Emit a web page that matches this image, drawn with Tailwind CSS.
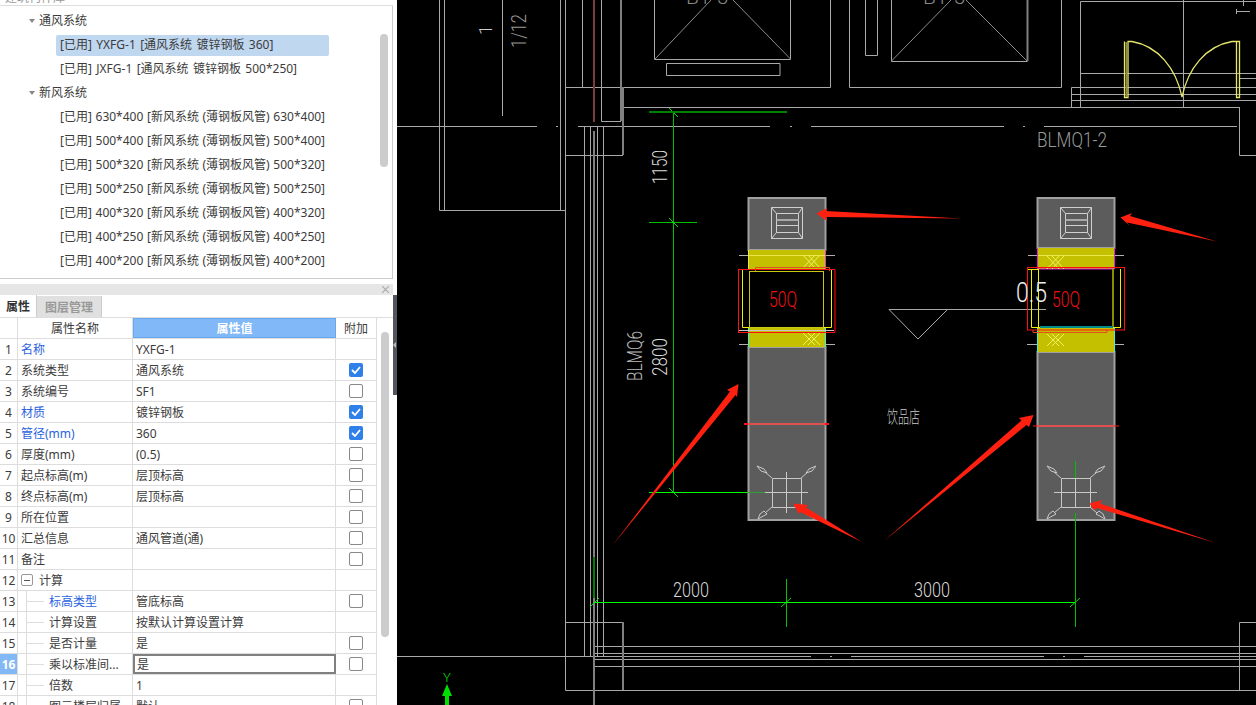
<!DOCTYPE html>
<html lang="en">
<head>
    <meta charset="UTF-8">
    <meta name="viewport" content="width=device-width, initial-scale=1.0">
    <title>风管属性</title>
    <script src="https://cdn.jsdelivr.net/npm/@tailwindcss/browser@4"></script>
</head>
<body class="bg-black h-screen overflow-hidden flex font-['Noto_Sans','Noto_Sans_CJK_SC',sans-serif] text-[12px] leading-none text-[#3c3c3c]">

    <!-- left panels -->
    <aside class="w-[393px] h-[705px] bg-white flex flex-col overflow-hidden shrink-0">
        <div class="h-[6px] border-b border-[#ddd] overflow-hidden shrink-0">
            <div class="-mt-[8px] ml-[5px] h-[12px] text-[#999]">建筑构件库</div>
        </div>

        <!-- tree -->
        <div class="h-[273px] border-b border-r border-[#ccc] flex shrink-0">
            <div class="w-[380px] pt-[3px]">
                <div class="h-6 flex items-center pl-[29px]"><span class="w-0 h-0 border-x-[3px] border-t-[4px] border-x-transparent border-t-[#888] mr-[4px]"></span>通风系统</div>
                <div class="h-6 flex items-center pl-[56px] [word-spacing:1.25px]"><span class="w-[273px] h-[21px] pl-[4px] flex items-center bg-[#c0d7f0] rounded-[2px]">[已用] YXFG-1 [通风系统 镀锌钢板 360]</span></div>
                <div class="h-6 flex items-center pl-[60px] [word-spacing:1.25px]">[已用] JXFG-1 [通风系统 镀锌钢板 500*250]</div>
                <div class="h-6 flex items-center pl-[29px]"><span class="w-0 h-0 border-x-[3px] border-t-[4px] border-x-transparent border-t-[#888] mr-[4px]"></span>新风系统</div>
                <div class="h-6 flex items-center pl-[60px] [word-spacing:0.5px]">[已用] 630*400 [新风系统 (薄钢板风管) 630*400]</div>
                <div class="h-6 flex items-center pl-[60px] [word-spacing:0.5px]">[已用] 500*400 [新风系统 (薄钢板风管) 500*400]</div>
                <div class="h-6 flex items-center pl-[60px] [word-spacing:0.5px]">[已用] 500*320 [新风系统 (薄钢板风管) 500*320]</div>
                <div class="h-6 flex items-center pl-[60px] [word-spacing:0.5px]">[已用] 500*250 [新风系统 (薄钢板风管) 500*250]</div>
                <div class="h-6 flex items-center pl-[60px] [word-spacing:0.5px]">[已用] 400*320 [新风系统 (薄钢板风管) 400*320]</div>
                <div class="h-6 flex items-center pl-[60px] [word-spacing:0.5px]">[已用] 400*250 [新风系统 (薄钢板风管) 400*250]</div>
                <div class="h-6 flex items-center pl-[60px] [word-spacing:0.5px]">[已用] 400*200 [新风系统 (薄钢板风管) 400*200]</div>
            </div>
            <div class="w-[8px] h-[133px] mt-[28px] bg-[#ccc] rounded-[4px]"></div>
        </div>

        <div class="h-[5px] shrink-0"></div>

        <!-- panel title bar -->
        <div class="h-[11px] bg-[#e6e6e6] flex items-center justify-end pr-[4px] shrink-0">
            <svg width="7" height="7" viewBox="0 0 7 7" fill="none" stroke="#aaa" stroke-width="1.2"><path d="M0 0L7 7M7 0L0 7"/></svg>
        </div>

        <!-- tabs -->
        <div class="h-[23px] flex items-stretch border-b border-[#ddd] shrink-0">
            <div class="w-[37px] pt-[2px] border-r border-[#ccc] flex items-center justify-center font-bold text-[#333]">属性</div>
            <div class="w-[65px] mt-px pt-[2px] bg-[#e0e0e0] border-r border-[#ccc] flex items-center justify-center font-bold text-[#999]">图层管理</div>
        </div>

        <div class="flex flex-1 min-h-0">
            <!-- property table -->
            <div class="w-[377px] border-r border-[#ddd]">
                <div class="h-[21px] flex border-b border-[#ddd]">
                    <div class="w-[18px] border-r border-[#ddd]"></div>
                    <div class="w-[115px] pt-[2px] border-r border-[#ddd] flex items-center justify-center">属性名称</div>
                    <div class="w-[203px] pt-[2px] bg-[#80b8f8] border border-[#6aa8ee] flex items-center justify-center font-bold text-white">属性值</div>
                    <div class="flex-1 pt-[2px] flex items-center justify-center">附加</div>
                </div>

                <div class="h-[21px] flex border-b border-[#ddd]"><div class="w-[18px] pt-[2px] border-r border-[#ddd] flex items-center justify-center">1</div><div class="w-[115px] pt-[2px] border-r border-[#ddd] flex items-center pl-[3px] text-[#2a62e0]">名称</div><div class="w-[203px] pt-[2px] border-r border-[#ddd] flex items-center pl-[3px]">YXFG-1</div><div class="flex-1"></div></div>
                <div class="h-[21px] flex border-b border-[#ddd]"><div class="w-[18px] pt-[2px] border-r border-[#ddd] flex items-center justify-center">2</div><div class="w-[115px] pt-[2px] border-r border-[#ddd] flex items-center pl-[3px]">系统类型</div><div class="w-[203px] pt-[2px] border-r border-[#ddd] flex items-center pl-[3px]">通风系统</div><div class="flex-1 flex items-center justify-center"><span class="w-[14px] h-[14px] bg-[#2f80e8] rounded-[2px] flex items-center justify-center"><svg width="10" height="8" viewBox="0 0 10 8" fill="none" stroke="#fff" stroke-width="1.8"><path d="M1 4L4 7L9 1"/></svg></span></div></div>
                <div class="h-[21px] flex border-b border-[#ddd]"><div class="w-[18px] pt-[2px] border-r border-[#ddd] flex items-center justify-center">3</div><div class="w-[115px] pt-[2px] border-r border-[#ddd] flex items-center pl-[3px]">系统编号</div><div class="w-[203px] pt-[2px] border-r border-[#ddd] flex items-center pl-[3px]">SF1</div><div class="flex-1 flex items-center justify-center"><span class="w-[14px] h-[14px] border border-[#888] rounded-[2px]"></span></div></div>
                <div class="h-[21px] flex border-b border-[#ddd]"><div class="w-[18px] pt-[2px] border-r border-[#ddd] flex items-center justify-center">4</div><div class="w-[115px] pt-[2px] border-r border-[#ddd] flex items-center pl-[3px] text-[#2a62e0]">材质</div><div class="w-[203px] pt-[2px] border-r border-[#ddd] flex items-center pl-[3px]">镀锌钢板</div><div class="flex-1 flex items-center justify-center"><span class="w-[14px] h-[14px] bg-[#2f80e8] rounded-[2px] flex items-center justify-center"><svg width="10" height="8" viewBox="0 0 10 8" fill="none" stroke="#fff" stroke-width="1.8"><path d="M1 4L4 7L9 1"/></svg></span></div></div>
                <div class="h-[21px] flex border-b border-[#ddd]"><div class="w-[18px] pt-[2px] border-r border-[#ddd] flex items-center justify-center">5</div><div class="w-[115px] pt-[2px] border-r border-[#ddd] flex items-center pl-[3px] text-[#2a62e0]">管径(mm)</div><div class="w-[203px] pt-[2px] border-r border-[#ddd] flex items-center pl-[3px]">360</div><div class="flex-1 flex items-center justify-center"><span class="w-[14px] h-[14px] bg-[#2f80e8] rounded-[2px] flex items-center justify-center"><svg width="10" height="8" viewBox="0 0 10 8" fill="none" stroke="#fff" stroke-width="1.8"><path d="M1 4L4 7L9 1"/></svg></span></div></div>
                <div class="h-[21px] flex border-b border-[#ddd]"><div class="w-[18px] pt-[2px] border-r border-[#ddd] flex items-center justify-center">6</div><div class="w-[115px] pt-[2px] border-r border-[#ddd] flex items-center pl-[3px]">厚度(mm)</div><div class="w-[203px] pt-[2px] border-r border-[#ddd] flex items-center pl-[3px]">(0.5)</div><div class="flex-1 flex items-center justify-center"><span class="w-[14px] h-[14px] border border-[#888] rounded-[2px]"></span></div></div>
                <div class="h-[21px] flex border-b border-[#ddd]"><div class="w-[18px] pt-[2px] border-r border-[#ddd] flex items-center justify-center">7</div><div class="w-[115px] pt-[2px] border-r border-[#ddd] flex items-center pl-[3px]">起点标高(m)</div><div class="w-[203px] pt-[2px] border-r border-[#ddd] flex items-center pl-[3px]">层顶标高</div><div class="flex-1 flex items-center justify-center"><span class="w-[14px] h-[14px] border border-[#888] rounded-[2px]"></span></div></div>
                <div class="h-[21px] flex border-b border-[#ddd]"><div class="w-[18px] pt-[2px] border-r border-[#ddd] flex items-center justify-center">8</div><div class="w-[115px] pt-[2px] border-r border-[#ddd] flex items-center pl-[3px]">终点标高(m)</div><div class="w-[203px] pt-[2px] border-r border-[#ddd] flex items-center pl-[3px]">层顶标高</div><div class="flex-1 flex items-center justify-center"><span class="w-[14px] h-[14px] border border-[#888] rounded-[2px]"></span></div></div>
                <div class="h-[21px] flex border-b border-[#ddd]"><div class="w-[18px] pt-[2px] border-r border-[#ddd] flex items-center justify-center">9</div><div class="w-[115px] pt-[2px] border-r border-[#ddd] flex items-center pl-[3px]">所在位置</div><div class="w-[203px] border-r border-[#ddd]"></div><div class="flex-1 flex items-center justify-center"><span class="w-[14px] h-[14px] border border-[#888] rounded-[2px]"></span></div></div>
                <div class="h-[21px] flex border-b border-[#ddd]"><div class="w-[18px] pt-[2px] border-r border-[#ddd] flex items-center justify-center">10</div><div class="w-[115px] pt-[2px] border-r border-[#ddd] flex items-center pl-[3px]">汇总信息</div><div class="w-[203px] pt-[2px] border-r border-[#ddd] flex items-center pl-[3px]">通风管道(通)</div><div class="flex-1 flex items-center justify-center"><span class="w-[14px] h-[14px] border border-[#888] rounded-[2px]"></span></div></div>
                <div class="h-[21px] flex border-b border-[#ddd]"><div class="w-[18px] pt-[2px] border-r border-[#ddd] flex items-center justify-center">11</div><div class="w-[115px] pt-[2px] border-r border-[#ddd] flex items-center pl-[3px]">备注</div><div class="w-[203px] border-r border-[#ddd]"></div><div class="flex-1 flex items-center justify-center"><span class="w-[14px] h-[14px] border border-[#888] rounded-[2px]"></span></div></div>
                <div class="h-[21px] flex border-b border-[#ddd]"><div class="w-[18px] pt-[2px] border-r border-[#ddd] flex items-center justify-center">12</div><div class="w-[115px] border-r border-[#ddd] flex items-center pl-[3px]"><span class="w-[12px] h-[12px] border border-[#999] rounded-[2px] flex items-center justify-center mr-[6px]"><span class="w-[6px] h-px bg-[#555]"></span></span><span class="pt-[2px]">计算</span></div><div class="w-[203px] border-r border-[#ddd]"></div><div class="flex-1"></div></div>
                <div class="h-[21px] flex border-b border-[#ddd]"><div class="w-[18px] pt-[2px] border-r border-[#ddd] flex items-center justify-center">13</div><div class="w-[115px] border-r border-[#ddd] flex items-center pl-[8px] text-[#2a62e0]"><span class="h-full w-[18px] border-l border-[#ddd] flex items-center mr-[5px]"><span class="w-full h-px bg-[#ddd]"></span></span><span class="pt-[2px]">标高类型</span></div><div class="w-[203px] pt-[2px] border-r border-[#ddd] flex items-center pl-[3px]">管底标高</div><div class="flex-1 flex items-center justify-center"><span class="w-[14px] h-[14px] border border-[#888] rounded-[2px]"></span></div></div>
                <div class="h-[21px] flex border-b border-[#ddd]"><div class="w-[18px] pt-[2px] border-r border-[#ddd] flex items-center justify-center">14</div><div class="w-[115px] border-r border-[#ddd] flex items-center pl-[8px]"><span class="h-full w-[18px] border-l border-[#ddd] flex items-center mr-[5px]"><span class="w-full h-px bg-[#ddd]"></span></span><span class="pt-[2px]">计算设置</span></div><div class="w-[203px] pt-[2px] border-r border-[#ddd] flex items-center pl-[3px]">按默认计算设置计算</div><div class="flex-1"></div></div>
                <div class="h-[21px] flex border-b border-[#ddd]"><div class="w-[18px] pt-[2px] border-r border-[#ddd] flex items-center justify-center">15</div><div class="w-[115px] border-r border-[#ddd] flex items-center pl-[8px]"><span class="h-full w-[18px] border-l border-[#ddd] flex items-center mr-[5px]"><span class="w-full h-px bg-[#ddd]"></span></span><span class="pt-[2px]">是否计量</span></div><div class="w-[203px] pt-[2px] border-r border-[#ddd] flex items-center pl-[3px]">是</div><div class="flex-1 flex items-center justify-center"><span class="w-[14px] h-[14px] border border-[#888] rounded-[2px]"></span></div></div>
                <div class="h-[21px] flex border-b border-[#ddd]"><div class="w-[18px] pt-[2px] border-r border-[#ddd] bg-[#82b8f5] font-bold text-white flex items-center justify-center">16</div><div class="w-[115px] border-r border-[#ddd] flex items-center pl-[8px]"><span class="h-full w-[18px] border-l border-[#ddd] flex items-center mr-[5px]"><span class="w-full h-px bg-[#ddd]"></span></span><span class="pt-[2px]">乘以标准间...</span></div><div class="w-[203px] pt-[1px] border-2 border-[#808080] flex items-center pl-[2px]">是</div><div class="flex-1 flex items-center justify-center"><span class="w-[14px] h-[14px] border border-[#888] rounded-[2px]"></span></div></div>
                <div class="h-[21px] flex border-b border-[#ddd]"><div class="w-[18px] pt-[2px] border-r border-[#ddd] flex items-center justify-center">17</div><div class="w-[115px] border-r border-[#ddd] flex items-center pl-[8px]"><span class="h-full w-[18px] border-l border-[#ddd] flex items-center mr-[5px]"><span class="w-full h-px bg-[#ddd]"></span></span><span class="pt-[2px]">倍数</span></div><div class="w-[203px] pt-[2px] border-r border-[#ddd] flex items-center pl-[3px]">1</div><div class="flex-1"></div></div>
                <div class="h-[21px] flex border-b border-[#ddd]"><div class="w-[18px] pt-[2px] border-r border-[#ddd] flex items-center justify-center">18</div><div class="w-[115px] border-r border-[#ddd] flex items-center pl-[8px]"><span class="h-full w-[18px] border-l border-[#ddd] flex items-center mr-[5px]"><span class="w-full h-px bg-[#ddd]"></span></span><span class="pt-[2px]">图元楼层归属</span></div><div class="w-[203px] pt-[2px] border-r border-[#ddd] flex items-center pl-[3px]">默认</div><div class="flex-1 flex items-center justify-center"><span class="w-[14px] h-[14px] border border-[#888] rounded-[2px]"></span></div></div>
            </div>
            <div class="w-[8px] h-[305px] ml-[4px] mt-[14px] bg-[#ccc] rounded-[4px]"></div>
        </div>
    </aside>

    <!-- splitter -->
    <div class="w-[4px] h-[705px] bg-white shrink-0">
        <div class="mt-[295px] h-[100px] bg-[#50565e] flex items-center">
            <span class="w-0 h-0 border-y-[3px] border-r-[3px] border-y-transparent border-r-[#bbb]"></span>
        </div>
    </div>

    <!-- CAD canvas -->
    <svg class="block shrink-0 bg-black" width="859" height="705" viewBox="397 0 859 705" fill="none">
        <!-- building lines -->
        <g stroke="#a8a8a8" stroke-width="1">
            <path d="M397 126.5H537M556 126.5H558M578 126.5H770M790 126.5H792M811 126.5H1004M1023 126.5H1025M1044 126.5H1237"/>
            <path d="M439.5 0V210.5M444.5 0V210.5M439.5 210.5H565.5M502.5 0V116M560.5 0V210.5M565.5 0V690.5"/>
            <path d="M582.5 0V87.5M565.5 87.5H830.5M830.5 0V87.5M849.5 0V87.5H1061.5V0M601.5 0V121.5H621"/>
            <path d="M623 107.5H1239.5M565.5 155.5H623"/>
            <path d="M584.5 127V656M590.5 127V656M597.5 127V656M603.5 127V656"/>
            <path d="M565.5 622.5H623M565.5 690.5H1256M397 656.5H811M830 656.5H832M851 656.5H1044M1063 656.5H1065M1084 656.5H1256"/>
            <path d="M594 646.5H1256M594 653.5H1256M594 659.5H1256M594 666.5H1256M1239.5 690V622.5H1256"/>
            <path d="M1239.5 107V155.5H1256M1080.5 107V1.5H1256M1183.5 0V107M1080.5 73.5H1256M1239 78.5H1256M1071.5 107V87.5H1256M1071.5 94.5H1256M1071.5 100.5H1256"/>
            <path d="M654.5 0V59.5H790.5V0M666.5 63.5H780V75.5H666.5Z"/>
            <path d="M655 59L711 0M790.5 59L733 0" stroke="#8c8c8c"/>
            <path d="M865.5 0V55.5H877.5V0M891.5 0V61.5H1027.5"/>
            <path d="M891.5 61L951 0M1027 61L966 0" stroke="#8c8c8c"/>
            <path d="M889 309.5H1046M889 309.5L918 339L947 310"/>
            <path d="M1243.5 0V6M1236 11.5H1250M1236.5 9V14"/>
        </g>
        <path d="M1027.5 0V61" stroke="#808080" stroke-width="2"/>
        <path d="M621 0V87" stroke="#808080" stroke-width="2"/>
        <path d="M622 87V121" stroke="#808080" stroke-width="4"/>
        <path d="M623 107V155M623 622V690" stroke="#808080" stroke-width="2"/>
        <path d="M594 131V705" stroke="#808080" stroke-width="2"/>
        <path d="M594 0V122" stroke="#7c3c3c" stroke-width="2"/>

        <!-- door -->
        <g stroke="#e6e66a" stroke-width="1.3">
            <path d="M1124.5 41.5V97.5H1128V41.5H1132C1158 46 1176 68 1182 97C1188 68 1206 46 1232 41.5H1239.5V97.5H1236.5V41.5"/>
        </g>
        <path d="M1126.5 42V97" stroke="#8c8c40" stroke-width="2"/>

        <!-- dimensions -->
        <g stroke="#00c000" stroke-width="1">
            <path d="M673.5 112V492M649 222.5H697M786.5 579V627"/>
            <path d="M669 108L678 117M669 218L678 227M669 488L678 497" stroke="#00e000"/>
            <path d="M590 607L599 598M781 607L791 598M1070 607L1080 598" stroke="#00e000"/>
        </g>
        <path d="M649 112H787" stroke="#008000" stroke-width="2"/>
        <path d="M649 492.5H748" stroke="#00ff00" stroke-width="1"/>
        <path d="M594 602.5H1075" stroke="#00ff00" stroke-width="1"/>
        <path d="M594 557V598" stroke="#008000" stroke-width="2"/>

        <!-- left duct -->
        <rect x="748.5" y="198" width="77" height="52" fill="#5c5c5c" stroke="#a0a0a0" stroke-width="2"/>
        <rect x="748.5" y="347" width="77" height="173" fill="#5c5c5c" stroke="#a0a0a0" stroke-width="2"/>
        <rect x="748" y="250" width="77" height="19" fill="#c4c000"/>
        <rect x="748" y="328" width="77" height="19" fill="#c4c000"/>
        <path d="M739 255.5H748M825 255.5H835M739 344.5H748M825 344.5H835" stroke="#b0b0b0"/>
        <path d="M748 255.5H825M748.5 250V269" stroke="#e8e84a"/>
        <path d="M825.5 250V269" stroke="#e040e0"/>
        <path d="M748.5 328V347M825.5 328V347" stroke="#40f0e0"/>
        <path d="M803 255L815 268M808 255L820 268M815 255L803 268M820 255L808 268M803 333L815 345M808 333L820 345M815 333L803 345M820 333L808 345" stroke="#f0f060"/>
        <path d="M755.5 271V267.5H829.5V271" stroke="#e05020"/>
        <path d="M742.5 269V327.5H831.5V269" stroke="#f0f000"/>
        <rect x="749.5" y="271.5" width="74" height="56" stroke="#c8c810"/>
        <path d="M739 330.5H835" stroke="#c8c8c8"/>
        <rect x="738.5" y="269.5" width="96" height="63" stroke="#ff1010"/>
        <path d="M835 270V332" stroke="#900000" stroke-width="2"/>
        <path d="M744 424H829" stroke="#ff1010" stroke-width="2"/>
        <path d="M748 424H825" stroke="#e05050" stroke-width="2"/>
        <path d="M748 492.5H765" stroke="#30a030"/>

        <!-- right duct -->
        <rect x="1037.5" y="198" width="77" height="50" fill="#5c5c5c" stroke="#a0a0a0" stroke-width="2"/>
        <rect x="1037.5" y="352" width="77" height="168" fill="#5c5c5c" stroke="#a0a0a0" stroke-width="2"/>
        <rect x="1037" y="248" width="77" height="21" fill="#c4c000"/>
        <rect x="1037" y="328" width="77" height="24" fill="#c4c000"/>
        <path d="M1028 255.5H1037M1114 255.5H1124M1027 344.5H1037M1114 344.5H1124" stroke="#b0b0b0"/>
        <path d="M1037 255.5H1114" stroke="#e8e84a"/>
        <path d="M1037.5 248V269H1114.5V248" stroke="#e020e0"/>
        <path d="M1037.5 328V352M1114.5 328V352" stroke="#40f0e0"/>
        <path d="M1047 256L1059 269M1052 256L1064 269M1059 256L1047 269M1064 256L1052 269M1047 334L1059 346M1052 334L1064 346M1059 334L1047 346M1064 334L1052 346" stroke="#f0f060"/>
        <path d="M1031.5 269V327.5H1120.5V269M1038.5 269V327.5M1027 269.5H1038" stroke="#f0f000"/>
        <path d="M1113 269V327" stroke="#8c8c00" stroke-width="2"/>
        <path d="M1040 327H1113" stroke="#008c8c" stroke-width="2"/>
        <path d="M1033 330V332.5H1107V330" stroke="#e05020"/>
        <rect x="1027.5" y="267.5" width="97" height="62.5" stroke="#ff1010"/>
        <path d="M1033 426H1119" stroke="#ff1010" stroke-width="1"/>
        <path d="M1037 426H1114" stroke="#e05050" stroke-width="2"/>
        <path d="M1075.5 461V478M1075.5 513V627" stroke="#00c000"/>

        <!-- supply diffusers -->
        <g stroke="#d0d0d0" stroke-width="1">
            <path d="M771.5 207.5H802.5V238.5H771.5ZM776.5 213.5H798.5V232.5H776.5ZM776.5 225.5H798.5M771.5 207.5L776.5 213.5M802.5 207.5L798.5 213.5M771.5 238.5L776.5 232.5M802.5 238.5L798.5 232.5"/>
            <path d="M776.5 220H798.5" stroke="#a8a8a8" stroke-width="2"/>
            <path d="M1060.5 207.5H1091.5V238.5H1060.5ZM1065.5 213.5H1087.5V232.5H1065.5ZM1065.5 225.5H1087.5M1060.5 207.5L1065.5 213.5M1091.5 207.5L1087.5 213.5M1060.5 238.5L1065.5 232.5M1091.5 238.5L1087.5 232.5"/>
            <path d="M1065.5 220H1087.5" stroke="#a8a8a8" stroke-width="2"/>
        </g>

        <!-- return diffusers -->
        <g stroke="#c8c8c8" stroke-width="1">
            <path d="M772.5 478.5H801.5V507.5H772.5ZM786.5 472V513M765 492.5H808"/>
            <path d="M772 478L765 472M801 478L808 472M772 507L765 513M801 507L808 513"/>
            <path d="M757 466L764 469L767 473L761 471ZM816 466L809 469L806 473L812 471ZM758 519L760 514L764 511L767 514ZM815 519L813 514L809 511L806 514Z"/>
            <path d="M1061.5 478.5H1090.5V507.5H1061.5ZM1075.5 478V507M1054 492.5H1097"/>
            <path d="M1061 478L1054 472M1090 478L1097 472M1061 507L1054 513M1090 507L1097 513"/>
            <path d="M1047 466L1054 469L1057 473L1051 471ZM1105 466L1098 469L1095 473L1101 471ZM1047 519L1049 514L1053 511L1056 514ZM1105 519L1103 514L1099 511L1096 514Z"/>
        </g>

        <!-- CAD text -->
        <g font-family="Roboto, sans-serif" font-weight="300" fill="#d8d8d8">
            <text x="673" y="597" font-size="20" textLength="36" lengthAdjust="spacingAndGlyphs">2000</text>
            <text x="914" y="597" font-size="20" textLength="36" lengthAdjust="spacingAndGlyphs">3000</text>
            <text transform="translate(667 184) rotate(-90)" font-size="20" textLength="34" lengthAdjust="spacingAndGlyphs">1150</text>
            <text transform="translate(667 376) rotate(-90)" font-size="20" textLength="38" lengthAdjust="spacingAndGlyphs">2800</text>
            <text transform="translate(642 381) rotate(-90)" font-size="20" textLength="50" lengthAdjust="spacingAndGlyphs" fill="#bbb">BLMQ6</text>
            <text transform="translate(526 48) rotate(-90)" font-size="20" textLength="34" lengthAdjust="spacingAndGlyphs" fill="#999">1/12</text>
            <text transform="translate(492 35) rotate(-90)" font-size="18" fill="#ccc">1</text>
            <text x="1037" y="147" font-size="20" textLength="70" lengthAdjust="spacingAndGlyphs" fill="#999">BLMQ1-2</text>
            <text x="686" y="4" font-size="18" textLength="42" lengthAdjust="spacingAndGlyphs" fill="#888">B1-5</text>
            <text x="923" y="4" font-size="18" textLength="42" lengthAdjust="spacingAndGlyphs" fill="#888">B1-5</text>
            <text x="1016" y="302" font-size="28" textLength="31" lengthAdjust="spacingAndGlyphs" fill="#eee">0.5</text>
            <text x="769" y="307" font-size="22" textLength="28" lengthAdjust="spacingAndGlyphs" fill="#f01010">50Q</text>
            <text x="1052" y="307" font-size="22" textLength="28" lengthAdjust="spacingAndGlyphs" fill="#f01010">50Q</text>
            <text transform="translate(887 423) scale(1 1.6)" font-size="11" textLength="33" lengthAdjust="spacing" font-family="Noto Sans CJK SC, sans-serif" fill="#ccc">饮品店</text>
            <text x="447" y="682" font-size="13" text-anchor="middle" fill="#00e000">Y</text>
        </g>

        <!-- UCS arrow -->
        <path d="M447 684L452 696H449V705H445V696H442Z" fill="#00e000"/>

        <!-- red markup arrows -->
        <g fill="#ff2010">
            <path d="M816.5 213.5L827 208L826 211L962 218.5L826 217L827 221Z"/>
            <path d="M1120.5 217.5L1132 213L1130 216L1217 241.5L1127 222.5L1130 226Z"/>
            <path d="M738.5 384L727 390L730 391.5L612 546L735.5 395L737 397Z"/>
            <path d="M793 503.5L808 505L806 507.5L862 542L800 512L799 514Z"/>
            <path d="M1033.5 415L1019 418L1021.5 420.5L884 541L1026.5 425L1029 427Z"/>
            <path d="M1089.5 503.5L1102 500L1100 503.5L1216 543L1097 508L1094 510Z"/>
        </g>
    </svg>
</body>
</html>
